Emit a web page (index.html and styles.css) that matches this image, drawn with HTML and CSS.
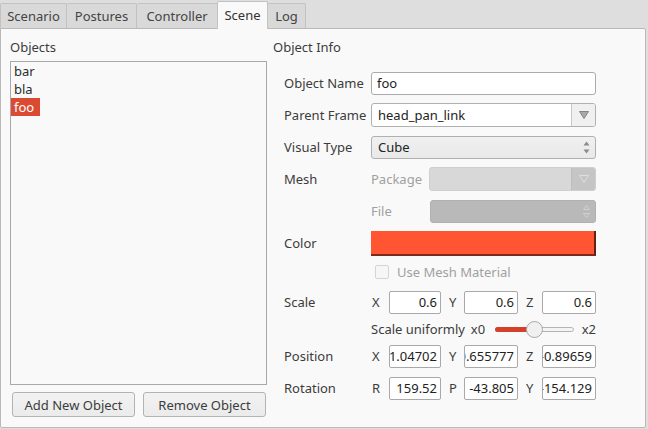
FILE: index.html
```html
<!DOCTYPE html>
<html>
<head>
<meta charset="utf-8">
<link rel="stylesheet" href="styles.css">
</head>
<body>
<div class="window">
  <div class="tabs">
    <div class="tab t1">Scenario</div>
    <div class="tab t2">Postures</div>
    <div class="tab t3">Controller</div>
    <div class="tab t4 active">Scene</div>
    <div class="tab t5">Log</div>
  </div>
  <div class="pane">
    <div class="left">
      <div class="title">Objects</div>
      <div class="list">
        <div class="item">bar</div>
        <div class="item">bla</div>
        <div class="item"><span class="sel">foo</span></div>
      </div>
      <div class="buttons">
        <div class="btn">Add New Object</div>
        <div class="btn">Remove Object</div>
      </div>
    </div>
    <div class="right">
      <div class="title">Object Info</div>
      <div class="form">
        <div class="row r32">
          <div class="lbl">Object Name</div>
          <div class="field"><div class="input">foo</div></div>
        </div>
        <div class="row r32">
          <div class="lbl">Parent Frame</div>
          <div class="field">
            <div class="combo edit">
              <div class="combo-text">head_pan_link</div>
              <div class="drop"><svg width="10" height="8" viewBox="0 0 10 8"><polygon points="0.5,0.5 9.5,0.5 5,7.5" fill="#a8a8a8" stroke="#858585" stroke-width="1"/></svg></div>
            </div>
          </div>
        </div>
        <div class="row r32">
          <div class="lbl">Visual Type</div>
          <div class="field">
            <div class="combo plain">
              <div class="combo-text">Cube</div>
              <svg class="spin" width="7" height="13" viewBox="0 0 7 13"><polygon points="3.5,0.5 6.5,4.5 0.5,4.5" fill="#8a8a8a"/><polygon points="0.5,8.5 6.5,8.5 3.5,12.5" fill="#8a8a8a"/></svg>
            </div>
          </div>
        </div>
        <div class="row r32">
          <div class="lbl">Mesh</div>
          <div class="field sub">
            <div class="sublbl w58">Package</div>
            <div class="combo dis1">
              <div class="combo-text"></div>
              <div class="drop dis"><svg width="10" height="8" viewBox="0 0 10 8"><polygon points="0.5,0.5 9.5,0.5 5,7.5" fill="none" stroke="#dedede" stroke-width="1"/></svg></div>
            </div>
          </div>
        </div>
        <div class="row r32">
          <div class="lbl"></div>
          <div class="field sub">
            <div class="sublbl w59">File</div>
            <div class="combo dis2">
              <div class="combo-text"></div>
              <svg class="spin" width="7" height="13" viewBox="0 0 7 13"><polygon points="3.5,0.5 6.5,4.5 0.5,4.5" fill="none" stroke="#d0d0d0"/><polygon points="0.5,8.5 6.5,8.5 3.5,12.5" fill="none" stroke="#d0d0d0"/></svg>
            </div>
          </div>
        </div>
        <div class="row r32">
          <div class="lbl">Color</div>
          <div class="field"><div class="color"></div></div>
        </div>
        <div class="row r26">
          <div class="lbl"></div>
          <div class="field check">
            <div class="box"></div>
            <div class="checklbl">Use Mesh Material</div>
          </div>
        </div>
        <div class="row r34">
          <div class="lbl">Scale</div>
          <div class="field xyz">
            <div class="axis">X</div><div class="num"><span>0.6</span></div>
            <div class="axis mid">Y</div><div class="num"><span>0.6</span></div>
            <div class="axis mid">Z</div><div class="num"><span>0.6</span></div>
          </div>
        </div>
        <div class="row r20">
          <div class="lbl"></div>
          <div class="field slider-row">
            <div class="su">Scale uniformly</div>
            <div class="x0">x0</div>
            <div class="slider">
              <div class="track"></div>
              <div class="fill"></div>
              <div class="handle"></div>
            </div>
            <div class="x2">x2</div>
          </div>
        </div>
        <div class="row r34">
          <div class="lbl">Position</div>
          <div class="field xyz">
            <div class="axis">X</div><div class="num"><span>-1.04702</span></div>
            <div class="axis mid">Y</div><div class="num"><span>-0.655777</span></div>
            <div class="axis mid">Z</div><div class="num"><span>-0.89659</span></div>
          </div>
        </div>
        <div class="row r30">
          <div class="lbl">Rotation</div>
          <div class="field xyz">
            <div class="axis">R</div><div class="num"><span>159.52</span></div>
            <div class="axis mid">P</div><div class="num"><span>-43.805</span></div>
            <div class="axis mid">Y</div><div class="num"><span>-154.129</span></div>
          </div>
        </div>
      </div>
    </div>
  </div>
</div>
</body>
</html>
```
FILE: styles.css
```css
* { box-sizing: border-box; }
html, body {
  margin: 0;
  padding: 0;
  background: #dedede;
  font-family: "Noto Sans", "Open Sans", sans-serif;
  font-size: 13px;
  color: #3c3c3c;
}
.window {
  width: 648px;
  height: 429px;
  display: flex;
  flex-direction: column;
}
.tabs {
  display: flex;
  height: 28px;
  align-items: flex-end;
}
.tab {
  height: 25px;
  border: 1px solid #c2c2c2;
  border-bottom: none;
  border-left: none;
  background: #d9d9d9;
  display: flex;
  align-items: center;
  justify-content: center;
  color: #444;
  border-radius: 2px 2px 0 0;
}
.t1 { width: 67px; border-left: 1px solid #c2c2c2; }
.t2 { width: 70px; }
.t3 { width: 81px; }
.t4 { width: 50px; }
.t5 { width: 38px; }
.tab.active {
  height: 28px;
  margin-bottom: -1px;
  background: #f9f9f9;
  position: relative;
  z-index: 2;
  color: #333;
  padding-bottom: 1px;
  border-left: 1px solid #c2c2c2;
  margin-left: -1px;
  width: 51px;
}
.pane {
  width: 646px;
  height: 400px;
  border: 1px solid #b9b9b9;
  background: #f9f9f9;
  display: flex;
  padding: 9px 0 0 9px;
  border-radius: 0 2px 2px 2px;
}
.left {
  width: 257px;
  display: flex;
  flex-direction: column;
}
.title {
  height: 18px;
  line-height: 18px;
  color: #3c3c3c;
}
.list {
  margin-top: 5px;
  height: 324px;
  border: 1px solid #a9a9a9;
  background: #f9f9f9;
}
.item {
  height: 18px;
  line-height: 18px;
  padding-left: 3px;
  color: #2c2c2c;
}
.item:last-child { padding-left: 0; }
.sel {
  display: inline-block;
  background: #db4a33;
  color: #fff;
  padding: 0 3px;
  width: 29px;
}
.buttons {
  display: flex;
  gap: 8px;
  margin-top: 7px;
  padding-left: 2px;
}
.btn {
  width: 123px;
  height: 25px;
  border: 1px solid #b3b3b3;
  border-radius: 3px;
  background: linear-gradient(#f2f2f2, #ebebeb);
  display: flex;
  align-items: center;
  justify-content: center;
  color: #3c3c3c;
}
.right {
  margin-left: 6px;
  width: 323px;
  display: flex;
  flex-direction: column;
}
.form {
  margin-top: 11px;
  padding-left: 11px;
  display: flex;
  flex-direction: column;
}
.row {
  display: flex;
  align-items: center;
}
.r32 { height: 32px; }
.r26 { height: 26px; }
.r34 { height: 34px; }
.r20 { height: 20px; }
.r30 { height: 30px; }
.lbl {
  width: 87px;
  color: #3c3c3c;
}
.field {
  width: 225px;
  display: flex;
  align-items: center;
}
.input {
  width: 225px;
  height: 23px;
  border: 1px solid #ababab;
  border-radius: 3px;
  background: #fff;
  padding-left: 5px;
  line-height: 21px;
  color: #222;
}
.combo {
  width: 225px;
  height: 24px;
  border: 1px solid #b0b0b0;
  border-radius: 3px;
  display: flex;
  align-items: center;
  overflow: hidden;
}
.combo-text {
  flex: 1;
  padding-left: 6px;
  color: #222;
}
.combo.edit { background: #fff; }
.drop {
  width: 24px;
  height: 100%;
  border-left: 1px solid #c8c8c8;
  background: #f0f0f0;
  display: flex;
  align-items: center;
  justify-content: center;
}
.combo.plain {
  height: 23px;
  background: linear-gradient(#f0f0f0, #e9e9e9);
}
.spin { margin-right: 5px; }
.sub { justify-content: flex-start; }
.sublbl { color: #a0a0a0; }
.w58 { width: 58px; }
.w59 { width: 59px; }
.combo.dis1 {
  width: 167px;
  background: #d8d8d8;
  border-color: #cfcfcf;
}
.drop.dis {
  background: #c5c5c5;
  border-left-color: #bdbdbd;
}
.combo.dis2 {
  width: 166px;
  height: 23px;
  background: #b9b9b9;
  border-color: #b1b1b1;
}
.color {
  width: 226px;
  height: 25px;
  background: #ff5533;
  border-right: 2px solid #5e2416;
  border-bottom: 2px solid #7c2b1a;
}
.check { padding-left: 4px; }
.box {
  width: 14px;
  height: 14px;
  border: 1px solid #d4d4d4;
  border-radius: 2px;
  background: #f6f6f6;
}
.checklbl {
  margin-left: 8px;
  color: #a0a0a0;
}
.xyz {
  display: grid;
  grid-template-columns: 18px 52px 23px 54px 24px 54px;
  align-items: center;
}
.axis {
  color: #3c3c3c;
  padding-left: 1px;
}
.axis.mid { padding-left: 8px; }
.num {
  height: 23px;
  border: 1px solid #a9a9a9;
  border-radius: 2px;
  background: #fff;
  display: flex;
  justify-content: flex-end;
  align-items: center;
  overflow: hidden;
  padding-right: 3px;
  white-space: nowrap;
  color: #222;
}
.su { width: 100px; }
.x0 { width: 24px; }
.slider {
  position: relative;
  width: 79px;
  height: 16px;
}
.track {
  position: absolute;
  left: 0;
  right: 0;
  top: 6px;
  height: 5px;
  border: 1px solid #b4b4b4;
  border-radius: 3px;
  background: #f4f4f4;
}
.fill {
  position: absolute;
  left: 0;
  width: 40px;
  top: 6px;
  height: 5px;
  border-radius: 3px;
  background: #d4412b;
}
.handle {
  position: absolute;
  left: 31px;
  top: 0;
  width: 17px;
  height: 17px;
  border-radius: 50%;
  border: 1px solid #a8a8a8;
  background: #f0f0f0;
}
.x2 { margin-left: 8px; }
```
